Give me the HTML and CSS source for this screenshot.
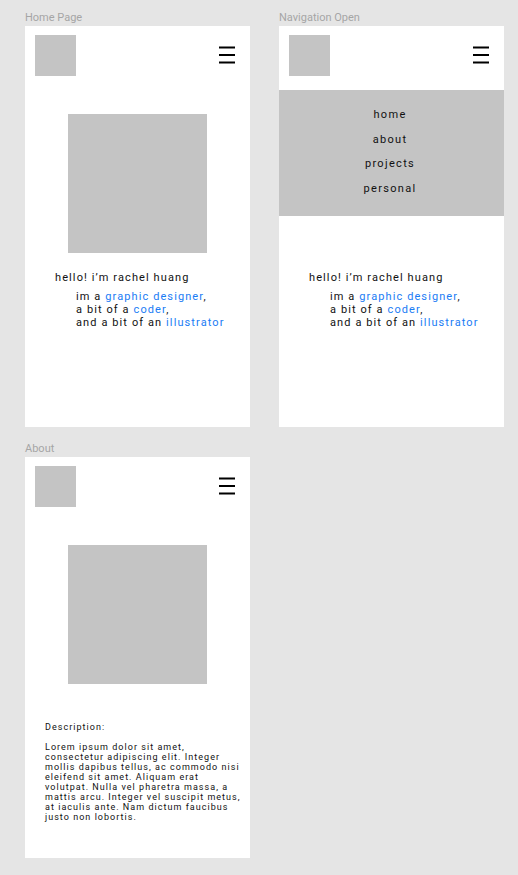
FILE: index.html
```html
<!DOCTYPE html>
<html lang="en">
<head>
    <meta charset="UTF-8">
    <meta name="viewport" content="width=device-width, initial-scale=1.0">
    <title>Portfolio Wireframes</title>
    <link rel="stylesheet" href="styles.css">
</head>
<body>
    <div class="canvas">
        <section class="board">
            <div class="board-label">Home Page</div>
            <div class="frame">
                <header class="header">
                    <div class="logo"></div>
                    <svg class="menu-icon" width="16" height="18" viewBox="0 0 16 18">
                        <path d="M0 1.5H16M0 9H16M0 16.5H16" stroke="#000" stroke-width="1.8"/>
                    </svg>
                </header>
                <div class="hero"></div>
                <div class="intro">
                    <p class="hello">hello! i’m rachel huang</p>
                    <p class="roles">
                        im a <span class="hl">graphic designer</span>,<br>
                        a bit of a <span class="hl">coder</span>,<br>
                        and a bit of an <span class="hl">illustrator</span>
                    </p>
                </div>
            </div>
        </section>

        <section class="board">
            <div class="board-label">Navigation Open</div>
            <div class="frame">
                <header class="header">
                    <div class="logo"></div>
                    <svg class="menu-icon" width="16" height="18" viewBox="0 0 16 18">
                        <path d="M0 1.5H16M0 9H16M0 16.5H16" stroke="#000" stroke-width="1.8"/>
                    </svg>
                </header>
                <nav class="nav">
                    <a href="#">home</a>
                    <a href="#">about</a>
                    <a href="#">projects</a>
                    <a href="#">personal</a>
                </nav>
                <div class="intro intro-nav">
                    <p class="hello">hello! i’m rachel huang</p>
                    <p class="roles">
                        im a <span class="hl">graphic designer</span>,<br>
                        a bit of a <span class="hl">coder</span>,<br>
                        and a bit of an <span class="hl">illustrator</span>
                    </p>
                </div>
            </div>
        </section>

        <section class="board">
            <div class="board-label">About</div>
            <div class="frame">
                <header class="header">
                    <div class="logo"></div>
                    <svg class="menu-icon" width="16" height="18" viewBox="0 0 16 18">
                        <path d="M0 1.5H16M0 9H16M0 16.5H16" stroke="#000" stroke-width="1.8"/>
                    </svg>
                </header>
                <div class="hero"></div>
                <div class="about">
                    <p class="about-title">Description:</p>
                    <p class="about-text">Lorem ipsum dolor sit amet,<br>
                        consectetur adipiscing elit. Integer<br>
                        mollis dapibus tellus, ac commodo nisi<br>
                        eleifend sit amet. Aliquam erat<br>
                        volutpat. Nulla vel pharetra massa, a<br>
                        mattis arcu. Integer vel suscipit metus,<br>
                        at iaculis ante. Nam dictum faucibus<br>
                        justo non lobortis.</p>
                </div>
            </div>
        </section>
    </div>
</body>
</html>
```

FILE: styles.css
```css
body {
    margin: 0;
    background: #e5e5e5;
    font-family: 'Roboto', sans-serif;
    color: #000;
}

p {
    margin: 0;
}

.canvas {
    display: grid;
    grid-template-columns: 225px 225px;
    column-gap: 29px;
    row-gap: 12px;
    padding: 8px 0 0 25px;
}

.board-label {
    height: 18px;
    box-sizing: border-box;
    padding-top: 2px;
    font-size: 11px;
    line-height: 16px;
    color: #a5a5a5;
}

.frame {
    background: #fff;
    height: 401px;
}

.header {
    display: flex;
    justify-content: space-between;
    align-items: flex-start;
    height: 64px;
    box-sizing: border-box;
    padding: 9px 15px 0 10px;
}

.logo {
    width: 41px;
    height: 41px;
    background: #c4c4c4;
}

.menu-icon {
    display: block;
    margin-top: 11px;
}

.hero {
    width: 139px;
    height: 139px;
    margin: 24px auto 0;
    background: #c4c4c4;
}

.intro {
    margin-top: 18px;
    padding-left: 30px;
    font-size: 11px;
    line-height: 13px;
    letter-spacing: 0.1em;
    color: #111;
}

.intro-nav {
    margin-top: 55px;
}

.roles {
    margin: 6px 0 0 21px;
}

.hl {
    color: #1a7cf5;
}

.nav {
    display: flex;
    flex-direction: column;
    align-items: center;
    height: 126px;
    box-sizing: border-box;
    padding: 13px 3px 0 0;
    background: #c4c4c4;
}

.nav a {
    color: #111;
    text-decoration: none;
    font-size: 11px;
    line-height: 24.5px;
    letter-spacing: 0.12em;
}

.about {
    margin-top: 38px;
    padding-left: 20px;
    font-size: 9px;
    line-height: 10px;
    letter-spacing: 0.115em;
    color: #111;
    white-space: nowrap;
}

.about-title {
    margin-bottom: 10px;
}
```
